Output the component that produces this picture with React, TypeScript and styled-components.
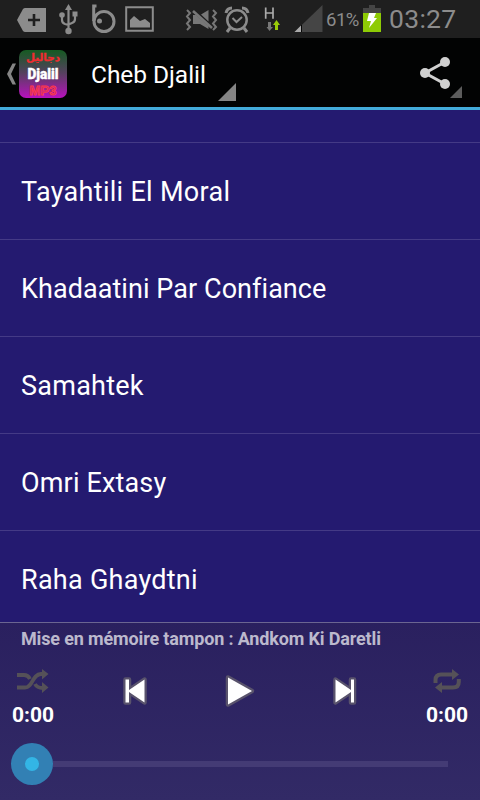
import React from "react";
import styled, { createGlobalStyle } from "styled-components";

const GlobalStyle = createGlobalStyle`
  body { margin: 0; background: #241a70; }
  * { box-sizing: border-box; }
`;

const Screen = styled.main`
  display: flex;
  flex-direction: column;
  width: 480px;
  height: 800px;
  overflow: hidden;
  background: #241a70;
  color: #fff;
  font-family: Roboto, "Noto Sans", sans-serif;
`;

const StatusBar = styled.header`
  display: flex;
  flex: none;
  height: 38px;
  background: #1f1f1f;
  color: #8c8c8c;
`;

const Icon = styled.svg<{ $gap?: number }>`
  display: block;
  flex: none;
  margin-left: ${(p) => p.$gap ?? 0}px;
  overflow: visible;
`;

const Percent = styled.span`
  width: 37px;
  margin-left: 3px;
  font-size: 18.5px;
  line-height: 40px;
  letter-spacing: -0.5px;
`;

const Clock = styled.time`
  margin-left: 8px;
  font-size: 26.5px;
  line-height: 38px;
  letter-spacing: 0.3px;
`;

const ActionBar = styled.nav`
  display: flex;
  flex: none;
  height: 72px;
  background: #020303;
  border-bottom: 3px solid #43abda;
`;

const Title = styled.h1`
  flex: none;
  width: 127px;
  margin: 0 0 0 24px;
  font-size: 24.5px;
  font-weight: 400;
  line-height: 73px;
  letter-spacing: -0.05px;
  white-space: nowrap;
`;

const Songs = styled.ul`
  flex: 1;
  min-height: 0;
  margin: 0;
  padding: 32px 0 0;
  overflow: hidden;
  list-style: none;
`;

const Song = styled.li<{ $spacing: number }>`
  height: 97px;
  padding-left: 21px;
  border-top: 1px solid #443a86;
  font-size: 27px;
  line-height: 99px;
  letter-spacing: ${(p) => p.$spacing}px;
  white-space: nowrap;
`;

const Player = styled.section`
  display: flex;
  flex: none;
  flex-direction: column;
  height: 178px;
  border-top: 1px solid #6b6591;
  background: linear-gradient(#2a205f, #322a66);
`;

const Message = styled.p`
  margin: 0;
  padding-left: 21px;
  height: 41px;
  color: #bcb9cd;
  font-size: 18px;
  font-weight: 700;
  line-height: 31px;
  letter-spacing: -0.15px;
  white-space: nowrap;
`;

const Controls = styled.div`
  display: flex;
  height: 65px;
`;

const Mode = styled.div`
  display: flex;
  flex-direction: column;
  align-items: center;
  width: 66px;
`;

const Elapsed = styled.span`
  font-size: 21px;
  font-weight: 700;
  line-height: 24px;
  margin-top: 5px;
`;

const Transport = styled.div`
  display: flex;
  flex: 1;
  justify-content: space-between;
  padding: 0 54px;
`;

const Seek = styled.div`
  display: flex;
  align-items: center;
  height: 44px;
  padding: 0 32px 0 11px;
  margin-top: 13px;
`;

const Thumb = styled.div`
  display: grid;
  flex: none;
  place-items: center;
  width: 42px;
  height: 42px;
  border-radius: 50%;
  background: #3280b4;
`;

const ThumbCore = styled.div`
  width: 14px;
  height: 14px;
  border-radius: 50%;
  background: #33b5e5;
`;

const Track = styled.div`
  flex: 1;
  height: 6px;
  background: #443b75;
`;

const songs = [
  { name: "Tayahtili El Moral", spacing: 0.3 },
  { name: "Khadaatini Par Confiance", spacing: 0.06 },
  { name: "Samahtek", spacing: 0.25 },
  { name: "Omri Extasy", spacing: 0.16 },
  { name: "Raha Ghaydtni", spacing: 0.26 },
];

const StatusIcons = () => (
  <>
    <Icon $gap={17} width="29" height="38" viewBox="17 0 29 38">
      <path d="M17 20 23 9Q24 8 25 8H46V32H25Q24 32 23 31Z" fill="#8c8c8c" />
      <path d="M34 14V26M28 20H40" stroke="#1f1f1f" strokeWidth="2.6" />
    </Icon>
    <Icon $gap={13} width="20" height="38" viewBox="59 0 20 38" fill="none" stroke="#8c8c8c" strokeWidth="2.2">
      <path d="M68.5 8V31M62 16V20Q62 23 65 24L68.500 25M75 16V19Q75 22 72 23L68.500 24.500" />
      <path d="M68.500 4 72 10H65Z" fill="#8c8c8c" stroke="none" />
      <circle cx="62" cy="15" r="2.800" fill="#8c8c8c" stroke="none" />
      <path d="M72.500 11.500H77.500V16.500H72.500Z" fill="#8c8c8c" stroke="none" />
      <circle cx="68.500" cy="31" r="3.200" fill="#8c8c8c" stroke="none" />
    </Icon>
    <Icon $gap={13} width="23" height="38" viewBox="92 0 23 38" fill="none" stroke="#8c8c8c" strokeWidth="3">
      <path d="M96.500 6H93.700V21" />
      <circle cx="104" cy="21.500" r="10" />
      <circle cx="99.500" cy="21" r="2.500" fill="#8c8c8c" stroke="none" />
    </Icon>
    <Icon $gap={10} width="29" height="38" viewBox="125 0 29 38">
      <path d="M126.200 7.200H152.800V30.800H126.200Z" fill="none" stroke="#8c8c8c" strokeWidth="2" />
      <path d="M130 27.500V20L134 16 140 21 145 19 150 23V27.500Z" fill="#8c8c8c" />
    </Icon>
    <Icon $gap={32} width="31" height="38" viewBox="186 0 31 38" fill="none" stroke="#777" strokeWidth="2">
      <path d="M187 10 190 13 187 16.500 190 20 187 23.500 190 27 187 30M213 10 216 13 213 16.500 216 20 213 23.500 216 27 213 30" />
      <path d="M193 15H196L208.500 26V29L200 24H193ZM201 14.500 208.500 10V21.500Z" fill="#777" stroke="none" />
      <path d="M193 11 212 28" stroke="#777" strokeWidth="2.600" />
    </Icon>
    <Icon $gap={8} width="24" height="38" viewBox="225 0 24 38" fill="none" stroke="#8c8c8c" strokeWidth="2.500">
      <circle cx="237" cy="20" r="9.700" />
      <path d="M226 13Q227 8 232 8M242 8Q247 8 248 13M230 28 227 32M244 28 247 32" strokeWidth="3" />
      <path d="M232.500 18 236.500 22 242 17" strokeWidth="2" />
    </Icon>
    <Icon $gap={15} width="17" height="38" viewBox="264 0 17 38">
      <path d="M265.700 7.500V18.700M273 7.500V18.700M265.500 13H273" fill="none" stroke="#aaa" strokeWidth="1.700" />
      <path d="M268 22H271V27H273L269.500 31 266.500 27H268Z" fill="#777" />
      <path d="M275 30V25H273L276.500 20 280 25H278V30Z" fill="#9acc08" />
    </Icon>
    <Icon $gap={13} width="29" height="38" viewBox="294 0 29 38">
      <path d="M294.500 32 322.500 5V32Z" fill="#454545" />
      <path d="M294.500 32 301 25.500V32Z" fill="#aaa" />
      <path d="M301.500 25V32" stroke="#080808" />
    </Icon>
    <Percent>61%</Percent>
    <Icon width="18" height="38" viewBox="363 0 18 38">
      <path d="M363 13V8H369V5H375V8H381V13Z" fill="#454545" />
      <path d="M363 13H381V32H363Z" fill="#8ecb05" />
      <path d="M369 13H376L374 18H377L369 28 371 21H367Z" fill="#fff" />
    </Icon>
    <Clock>03:27</Clock>
  </>
);

const AppLogo = () => (
  <Icon $gap={2} width="48" height="69" viewBox="0 0 48 69" textAnchor="middle">
    <defs>
      <linearGradient id="logo" x1="0" y1="0" x2="0" y2="1">
        <stop stopColor="#155b22" />
        <stop offset=".48" stopColor="#56405f" />
        <stop offset="1" stopColor="#b811bd" />
      </linearGradient>
    </defs>
    <rect y="12" width="48" height="48" rx="7" fill="url(#logo)" />
    <text x="24" y="23" fontFamily="DejaVu Sans, sans-serif" fontWeight="700" fontSize="10.500" fill="#f12c30" stroke="#f12c30" strokeWidth=".3" textLength="34" lengthAdjust="spacingAndGlyphs">دجاليل</text>
    <text x="24" y="40.500" fontFamily="Roboto, sans-serif" fontWeight="900" fontSize="14.500" fill="#fff" stroke="#fff" strokeWidth=".4" textLength="31" lengthAdjust="spacingAndGlyphs">Djalil</text>
    <text x="24" y="56.500" fontFamily="Liberation Sans, sans-serif" fontWeight="700" fontSize="13" fill="#c52b83" stroke="#ff3a43" strokeWidth=".8" textLength="27" lengthAdjust="spacingAndGlyphs">MP3</text>
  </Icon>
);

export default function App() {
  return (
    <>
      <GlobalStyle />
      <Screen>
        <StatusBar><StatusIcons /></StatusBar>
        <ActionBar>
          <Icon $gap={7} width="10" height="69" viewBox="7 38 10 69">
            <path d="M12.500 63.500H16L11 74 16 84.500H12.500L7 74Z" fill="#858585" />
          </Icon>
          <AppLogo />
          <Title>Cheb Djalil</Title>
          <Icon width="18" height="69" viewBox="218 38 18 69">
            <path d="M218 101 236 83V101Z" fill="#858585" />
          </Icon>
          <Icon $gap={184} width="43" height="69" viewBox="420 38 43 69">
            <path d="M445 62 425 73 445 84" fill="none" stroke="#d0d0d0" strokeWidth="3" />
            <g fill="#d0d0d0"><circle cx="445" cy="62" r="5" /><circle cx="425" cy="73" r="5" /><circle cx="445" cy="84" r="5" /></g>
            <path d="M450 98 462 86V98Z" fill="#5c5c5c" />
          </Icon>
        </ActionBar>
        <Songs>
          {songs.map((s) => <Song key={s.name} $spacing={s.spacing}>{s.name}</Song>)}
        </Songs>
        <Player>
          <Message>Mise en mémoire tampon : Andkom Ki Daretli</Message>
          <Controls>
            <Mode>
              <Icon width="34" height="34" viewBox="16 664 34 34" fill="none" stroke="#555158" strokeWidth="3.800">
                <path d="M17 675H24Q28 675 30 679M17 687.500H25C33 687.500 32 674 41 674H44M35 684Q37 688 43 688" />
                <path d="M42 669 48.500 674 42 679.500ZM42 682 48.500 687.500 42 693Z" fill="#555158" stroke="none" />
              </Icon>
              <Elapsed>0:00</Elapsed>
            </Mode>
            <Transport>
              <Icon width="30" height="54" viewBox="120 664 30 54">
                <path d="M125.500 679.500H129V690L144.500 679.500V702.500L129 692V702.500H125.500Z" fill="#fff" stroke="#59536c" strokeWidth="4.500" strokeLinejoin="round" paintOrder="stroke" />
              </Icon>
              <Icon width="32" height="54" viewBox="224 664 32 54">
                <path d="M228 677.500 252 691 228 704.500Z" fill="#fff" stroke="#59536c" strokeWidth="4.500" strokeLinejoin="round" paintOrder="stroke" />
              </Icon>
              <Icon width="30" height="54" viewBox="330 664 30 54">
                <path d="M335.500 679.500 351 690V679.500H354V702.500H351V692L335.500 702.500Z" fill="#fff" stroke="#59536c" strokeWidth="4.500" strokeLinejoin="round" paintOrder="stroke" />
              </Icon>
            </Transport>
            <Mode>
              <Icon width="34" height="34" viewBox="430 664 34 34" fill="none" stroke="#555158" strokeWidth="4">
                <path d="M435.500 683V680Q435.500 674.500 441 674.500H454M458.800 679V682Q458.800 687.500 453 687.500H440" />
                <path d="M452 669 459 674.500 452 680ZM442 682 435 687.500 442 693Z" fill="#555158" stroke="none" />
              </Icon>
              <Elapsed>0:00</Elapsed>
            </Mode>
          </Controls>
          <Seek><Thumb><ThumbCore /></Thumb><Track /></Seek>
        </Player>
      </Screen>
    </>
  );
}
